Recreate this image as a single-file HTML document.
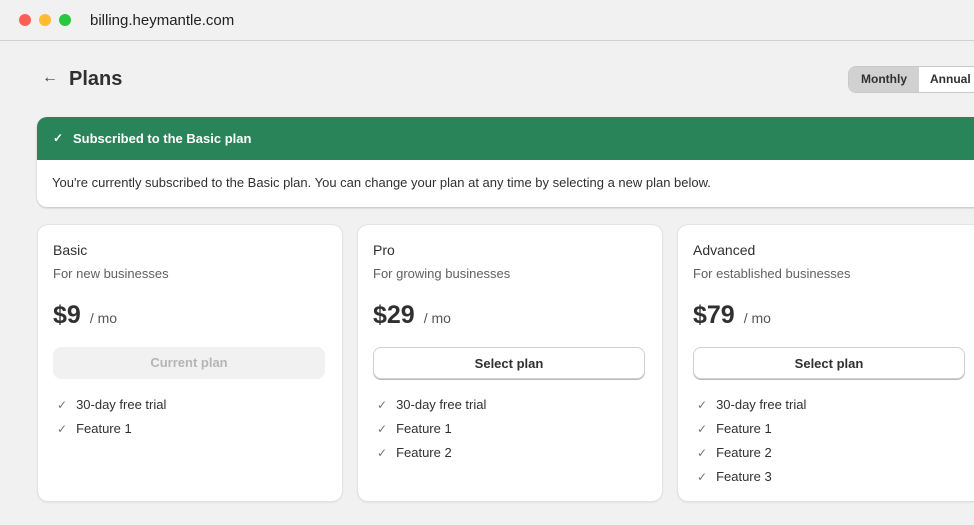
<!DOCTYPE html>
<html><head><style>
*{box-sizing:border-box;margin:0;padding:0}
body{width:974px;height:525px;overflow:hidden;background:#f1f1f1;font-family:"Liberation Sans",sans-serif;color:#303030;position:relative}
.top{position:absolute;left:0;top:0;width:974px;height:41px;border-bottom:1px solid #d0d0d0;background:#f1f1f1}
.dot{position:absolute;top:14px;width:12px;height:12px;border-radius:50%}
.url{position:absolute;left:90px;top:12px;font-size:15px;color:#222}
.back{position:absolute;left:42px;top:69px;font-size:16px;color:#444}
h1{position:absolute;left:69px;top:68px;font-size:20px;font-weight:bold;color:#303030}
.tog{position:absolute;left:848px;top:66px;width:140px;height:27px;border:1px solid #c9c9c9;border-radius:8px;overflow:hidden;background:#fff;font-size:12px;font-weight:bold}
.tog .m{position:absolute;left:0;top:0;width:70px;height:27px;background:#d1d1d1;text-align:center;line-height:25px}
.tog .a{position:absolute;left:81px;top:0;line-height:25px}
.ban{position:absolute;left:37px;top:117px;width:950px;height:90px;background:#fff;border-radius:10px;box-shadow:0 1px 2px rgba(0,0,0,.2);overflow:hidden}
.ban .g{height:43px;background:#2a845a;color:#fff;font-size:13px;font-weight:bold;padding:14px 0 0 36px;position:relative}
.ban .g span{position:absolute;left:16px;top:14px;font-size:12px}
.ban .t{font-size:13px;padding:15px 0 0 15px;color:#303030}
.card{position:absolute;top:225px;width:304px;height:276px;background:#fff;border-radius:10px;box-shadow:0 0 0 1px #e3e3e3,0 1px 2px rgba(0,0,0,.15);padding:0 16px}
.n{position:absolute;left:15px;top:17px;font-size:14px}
.s{position:absolute;left:15px;top:41px;font-size:13px;color:#616161}
.p{position:absolute;left:15px;top:76px;font-size:25px;font-weight:bold;color:#303030}
.p small{font-size:14px;font-weight:normal;color:#555;margin-left:9px}
.b{position:absolute;left:15px;top:122px;width:272px;height:32px;border-radius:8px;font-size:13px;font-weight:bold;text-align:center;line-height:31px}
.b.cur{background:#f1f1f1;color:#b5b5b5}
.b.sel{background:#fff;border:1px solid #d0d0d0;box-shadow:0 1px 0 #bbb;color:#303030}
.f{position:absolute;left:19px;font-size:13px;color:#303030}
.f i{font-style:normal;color:#777;margin-right:9px;font-size:12px}
</style></head><body>
<div class="top">
<div class="dot" style="left:19px;background:#fe5f57"></div>
<div class="dot" style="left:39px;background:#febc2e"></div>
<div class="dot" style="left:59px;background:#28c840"></div>
<div class="url">billing.heymantle.com</div>
</div>
<div class="back">←</div>
<h1>Plans</h1>
<div class="tog"><div class="m">Monthly</div><div class="a">Annual</div></div>
<div class="ban"><div class="g"><span>✓</span>Subscribed to the Basic plan</div>
<div class="t">You're currently subscribed to the Basic plan. You can change your plan at any time by selecting a new plan below.</div></div>

<div class="card" style="left:38px">
<div class="n">Basic</div><div class="s">For new businesses</div>
<div class="p">$9<small>/ mo</small></div>
<div class="b cur">Current plan</div>
<div class="f" style="top:172px"><i>✓</i>30-day free trial</div>
<div class="f" style="top:196px"><i>✓</i>Feature 1</div>
</div>
<div class="card" style="left:358px">
<div class="n">Pro</div><div class="s">For growing businesses</div>
<div class="p">$29<small>/ mo</small></div>
<div class="b sel">Select plan</div>
<div class="f" style="top:172px"><i>✓</i>30-day free trial</div>
<div class="f" style="top:196px"><i>✓</i>Feature 1</div>
<div class="f" style="top:220px"><i>✓</i>Feature 2</div>
</div>
<div class="card" style="left:678px">
<div class="n">Advanced</div><div class="s">For established businesses</div>
<div class="p">$79<small>/ mo</small></div>
<div class="b sel">Select plan</div>
<div class="f" style="top:172px"><i>✓</i>30-day free trial</div>
<div class="f" style="top:196px"><i>✓</i>Feature 1</div>
<div class="f" style="top:220px"><i>✓</i>Feature 2</div>
<div class="f" style="top:244px"><i>✓</i>Feature 3</div>
</div>
</body></html>
